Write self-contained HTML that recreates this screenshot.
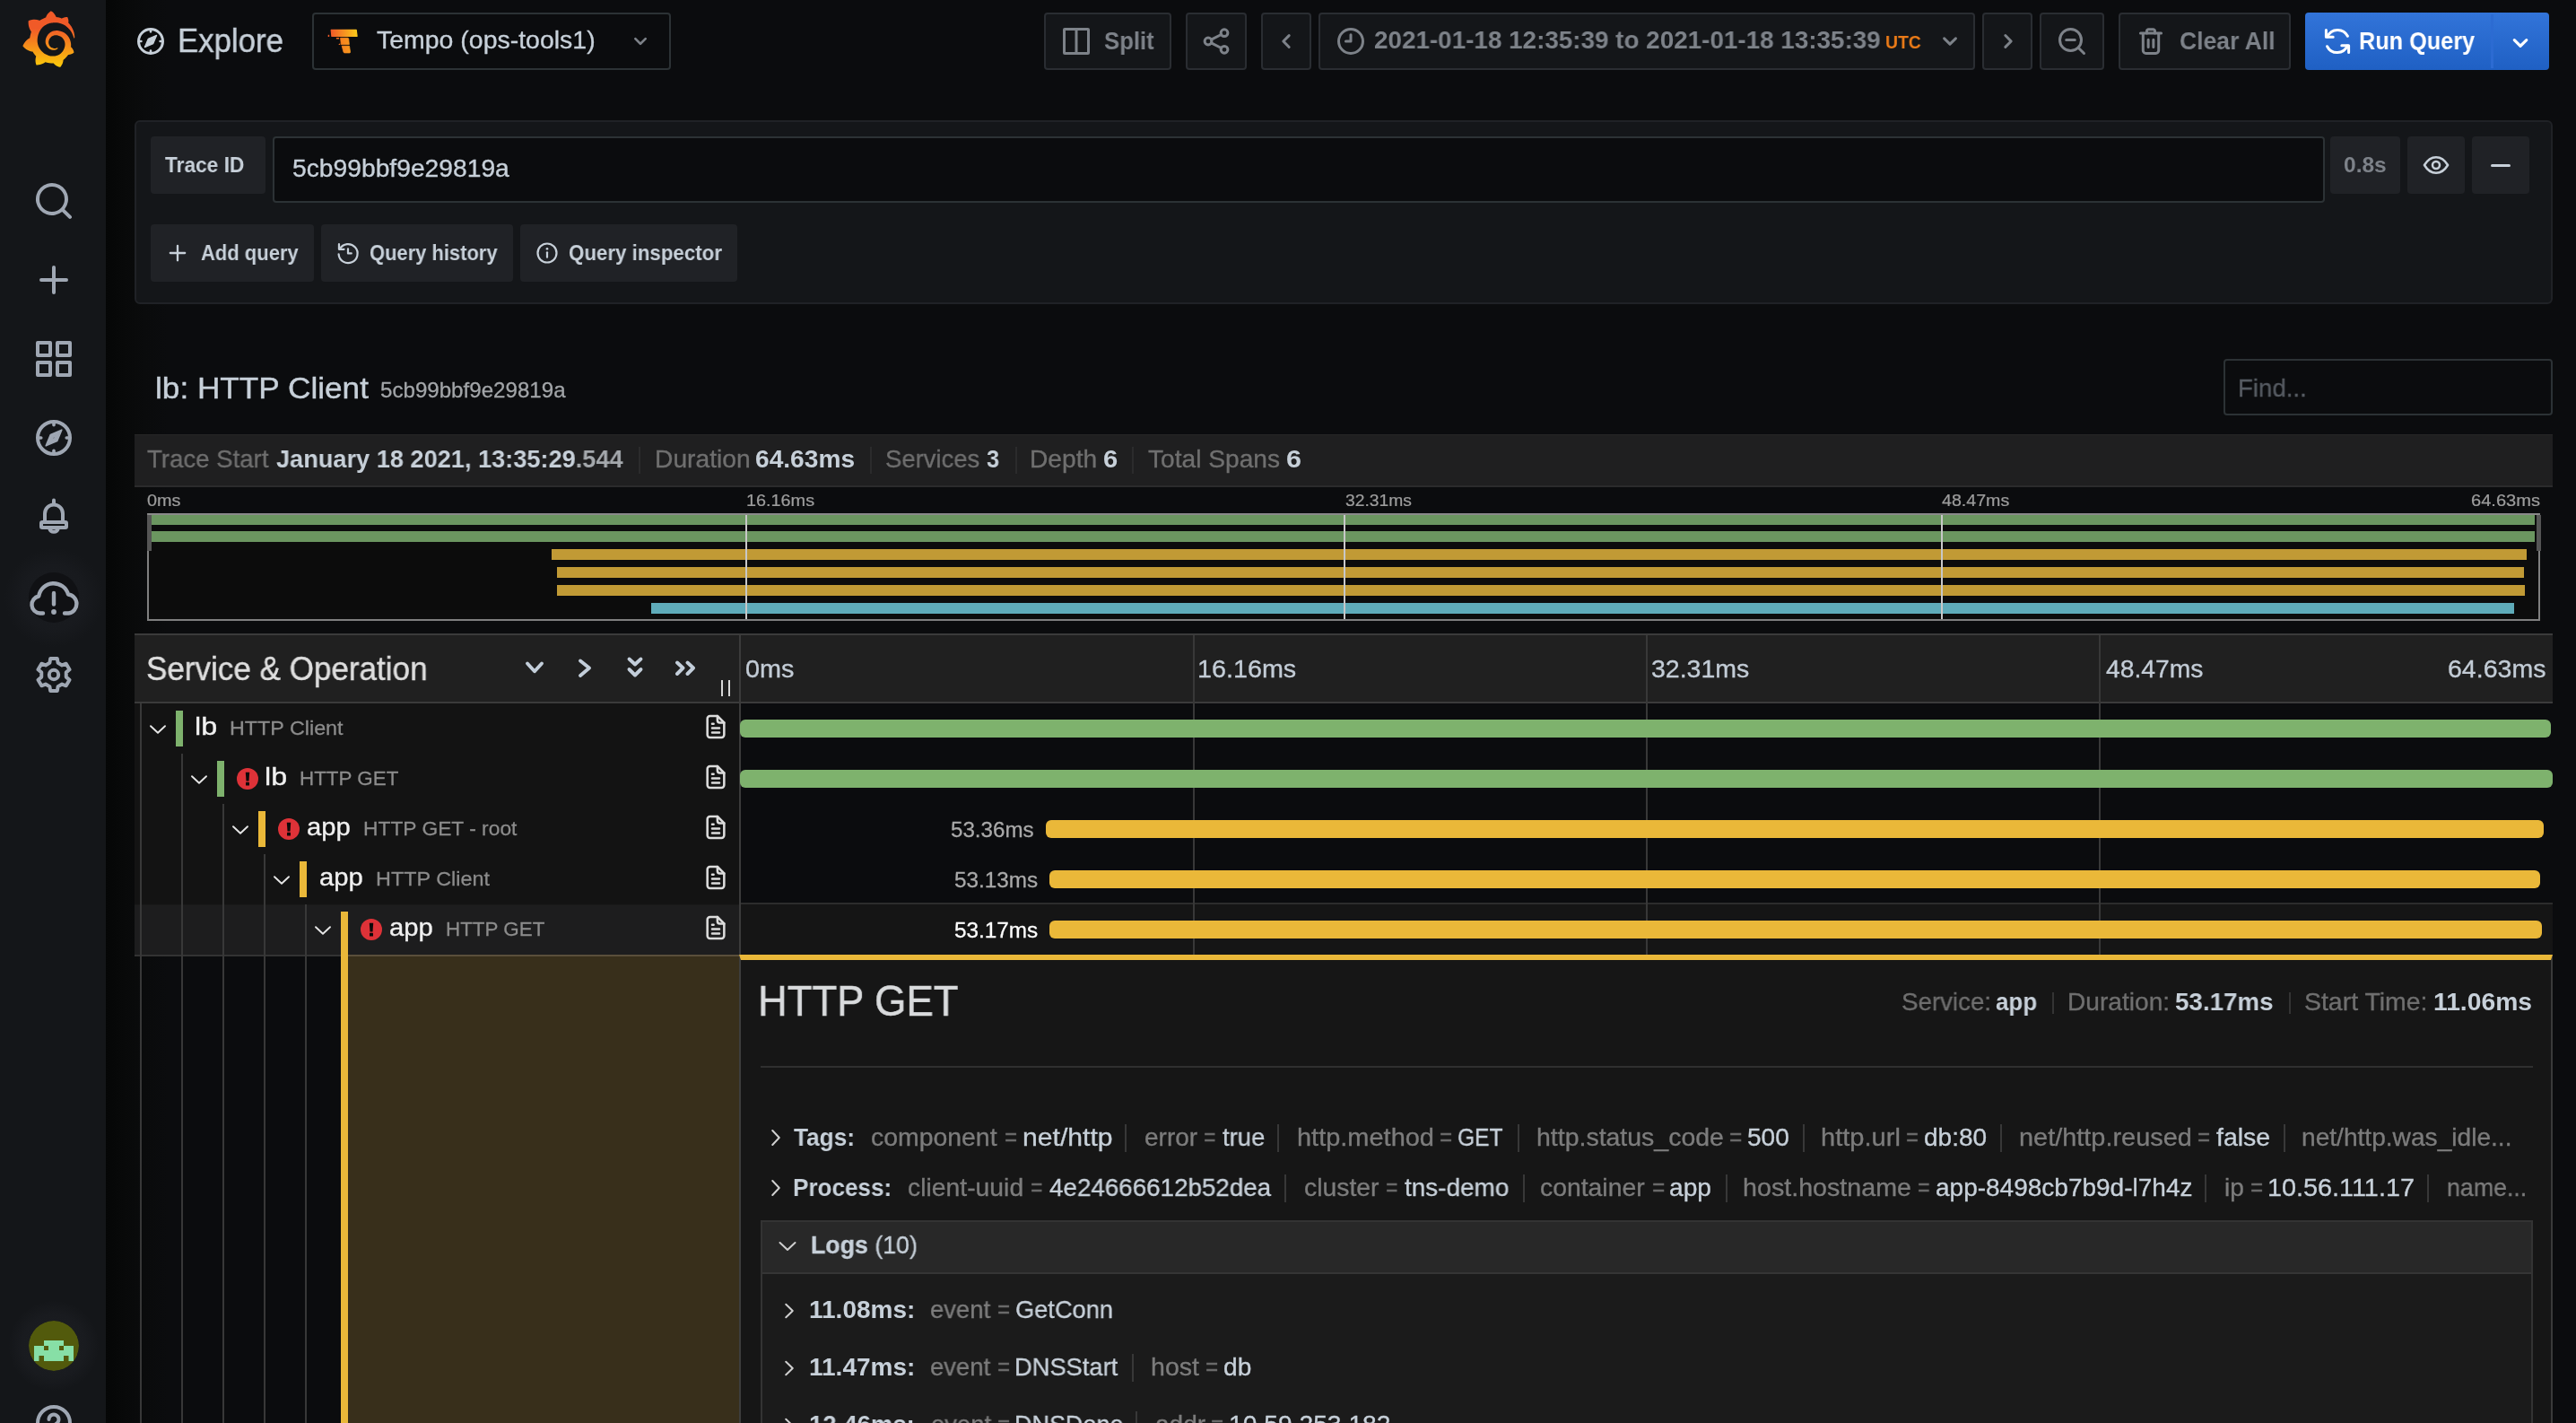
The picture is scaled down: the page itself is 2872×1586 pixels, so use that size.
<!DOCTYPE html>
<html lang="en"><head><meta charset="utf-8"><title>Explore - Tempo - Grafana</title>
<style>
html,body{margin:0;padding:0;background:#0b0c0e;}
body{width:2872px;height:1586px;overflow:hidden;position:relative;font-family:"Liberation Sans",Arial,sans-serif;}
#root,#root div,#root span,#root svg,#root section,#root nav,#root header,#root h1,#root h2,#root button,#root label{position:absolute;box-sizing:border-box;margin:0;padding:0;}
#root{left:0;top:0;width:2872px;height:1586px;overflow:hidden;background:#0b0c0e;}
.g{left:0;top:0;width:0;height:0;}
.t{white-space:pre;transform-origin:0 50%;font-weight:400;will-change:transform;}
.t b{font-weight:700;}
#root .t span,#root .t b{position:static;}
</style></head>
<body>
<div id="root">
<div style="left:118px;top:0px;width:70px;height:1586px;background:linear-gradient(90deg,#050606 0,#080909 28%,#0a0b0c 62%,#0b0c0e 100%);"></div>
<nav class="g" id="sidemenu">
<div style="left:0px;top:0px;width:118px;height:1586px;background:#141619;"></div>
<svg style="left:24px;top:12px" width="60.7" height="63.1" viewBox="0 0 351 365"><defs><linearGradient id="lg" gradientUnits="userSpaceOnUse" x1="175.5" y1="445" x2="175.5" y2="114"><stop offset="0" stop-color="#FFF100"/><stop offset="1" stop-color="#F05A28"/></linearGradient></defs><path fill="url(#lg)" d="M342,161.2c-0.6-6.1-1.6-13.1-3.6-20.9c-2-7.7-5-16.2-9.4-25c-4.4-8.8-10.1-17.9-17.5-26.8c-2.9-3.5-6.1-6.9-9.5-10.2c5.1-20.3-6.2-37.9-6.2-37.9c-19.5-1.2-31.9,6.1-36.5,9.4c-0.8-0.3-1.5-0.7-2.3-1c-3.3-1.3-6.7-2.6-10.3-3.7c-3.5-1.1-7.1-2.1-10.8-3c-3.7-0.9-7.4-1.6-11.2-2.2c-0.7-0.1-1.3-0.2-2-0.3c-8.5-27.2-32.9-38.6-32.9-38.6c-27.3,17.3-32.4,41.5-32.4,41.5s-0.1,0.5-0.3,1.4c-1.5,0.4-3,0.9-4.5,1.3c-2.1,0.6-4.2,1.4-6.2,2.2c-2.1,0.8-4.1,1.6-6.2,2.5c-4.1,1.8-8.2,3.8-12.2,6c-3.9,2.2-7.7,4.6-11.4,7.1c-0.5-0.2-1-0.4-1-0.4c-37.8-14.4-71.3,2.9-71.3,2.9c-3.1,40.2,15.1,65.5,18.7,70.1c-0.9,2.5-1.7,5-2.5,7.5c-2.8,9.1-4.9,18.4-6.2,28.1c-0.2,1.4-0.4,2.8-0.5,4.2C18.8,192.7,8.5,228,8.5,228c29.1,33.5,63.1,35.6,63.1,35.6c0,0,0.1-0.1,0.1-0.1c4.3,7.7,9.3,15,14.9,21.9c2.4,2.9,4.8,5.6,7.4,8.3c-10.6,30.4,1.5,55.6,1.5,55.6c32.4,1.2,53.7-14.2,58.2-17.7c3.2,1.1,6.5,2.1,9.8,2.9c10,2.6,20.2,4.1,30.4,4.5c2.5,0.1,5.1,0.2,7.6,0.1l1.2,0l0.8,0l1.6,0l1.6-0.1l0,0.1c15.3,21.8,42.1,24.9,42.1,24.9c19.1-20.1,20.2-40.1,20.2-44.4l0,0c0,0,0-0.1,0-0.3c0-0.4,0-0.6,0-0.6l0,0c0-0.3,0-0.6,0-0.9c4-2.8,7.8-5.8,11.4-9.1c7.6-6.9,14.3-14.8,19.9-23.3c0.5-0.8,1-1.6,1.5-2.4c21.6,1.2,36.9-13.4,36.9-13.4c-3.6-22.5-16.4-33.5-19.1-35.6l0,0c0,0-0.1-0.1-0.3-0.2c-0.2-0.1-0.2-0.2-0.2-0.2c0,0,0,0,0,0c-0.1-0.1-0.3-0.2-0.5-0.3c0.1-1.4,0.2-2.7,0.3-4.1c0.2-2.4,0.2-4.9,0.2-7.3l0-1.8l0-0.9l0-0.5c0-0.6,0-0.4,0-0.6l-0.1-1.5l-0.1-2c0-0.7-0.1-1.3-0.2-1.9c-0.1-0.6-0.1-1.3-0.2-1.9l-0.2-1.9l-0.3-1.9c-0.4-2.5-0.8-4.9-1.4-7.4c-2.3-9.7-6.1-18.9-11-27.2c-5-8.3-11.2-15.6-18.3-21.8c-7-6.2-14.9-11.2-23.1-14.9c-8.3-3.7-16.9-6.1-25.5-7.2c-4.3-0.6-8.6-0.8-12.9-0.7l-1.6,0l-0.4,0c-0.1,0-0.6,0-0.5,0l-0.7,0l-1.6,0.1c-0.6,0-1.2,0.1-1.7,0.1c-2.2,0.2-4.4,0.5-6.5,0.9c-8.6,1.6-16.7,4.7-23.8,9c-7.1,4.3-13.3,9.6-18.3,15.6c-5,6-8.9,12.7-11.6,19.6c-2.7,6.9-4.2,14.1-4.6,21c-0.1,1.7-0.1,3.5-0.1,5.2c0,0.4,0,0.9,0,1.3l0.1,1.4c0.1,0.8,0.1,1.7,0.2,2.5c0.3,3.5,1,6.9,1.9,10.1c1.9,6.5,4.9,12.4,8.6,17.4c3.7,5,8.2,9.1,12.9,12.4c4.7,3.2,9.8,5.5,14.8,7c5,1.5,10,2.1,14.7,2.1c0.6,0,1.2,0,1.7,0c0.3,0,0.6,0,0.9,0c0.3,0,0.6,0,0.9-0.1c0.5,0,1-0.1,1.5-0.1c0.1,0,0.3,0,0.4-0.1l0.5-0.1c0.3,0,0.6-0.1,0.9-0.1c0.6-0.1,1.1-0.2,1.7-0.3c0.6-0.1,1.1-0.2,1.6-0.4c1.1-0.2,2.1-0.6,3.1-0.9c2-0.7,4-1.5,5.7-2.4c1.8-0.9,3.4-2,5-3c0.4-0.3,0.9-0.6,1.3-1c1.6-1.3,1.9-3.7,0.6-5.3c-1.1-1.4-3.1-1.8-4.7-0.9c-0.4,0.2-0.8,0.4-1.2,0.6c-1.4,0.7-2.8,1.3-4.3,1.8c-1.5,0.5-3.1,0.9-4.7,1.2c-0.8,0.1-1.6,0.2-2.5,0.3c-0.4,0-0.8,0.1-1.3,0.1c-0.4,0-0.9,0-1.2,0c-0.4,0-0.8,0-1.2,0c-0.5,0-1,0-1.5-0.1c0,0-0.3,0-0.1,0l-0.2,0l-0.3,0c-0.2,0-0.5,0-0.7-0.1c-0.5-0.1-0.9-0.1-1.4-0.2c-3.7-0.5-7.4-1.6-10.9-3.2c-3.6-1.6-7-3.8-10.1-6.6c-3.1-2.8-5.8-6.1-7.9-9.9c-2.1-3.8-3.6-8-4.3-12.4c-0.3-2.2-0.5-4.5-0.4-6.7c0-0.6,0.1-1.2,0.1-1.8c0,0.2,0-0.1,0-0.1l0-0.2l0-0.5c0-0.3,0.1-0.6,0.1-0.9c0.1-1.2,0.3-2.4,0.5-3.6c1.7-9.6,6.5-19,13.9-26.1c1.9-1.8,3.9-3.4,6-4.9c2.1-1.5,4.4-2.8,6.8-3.9c2.4-1.1,4.8-2,7.4-2.7c2.5-0.7,5.1-1.1,7.8-1.4c1.3-0.1,2.6-0.2,4-0.2c0.4,0,0.6,0,0.9,0l1.1,0l0.7,0c0.3,0,0,0,0.1,0l0.3,0l1.1,0.1c2.9,0.2,5.7,0.6,8.5,1.3c5.6,1.2,11.1,3.3,16.2,6.1c10.2,5.7,18.9,14.5,24.2,25.1c2.7,5.3,4.6,11,5.5,16.9c0.2,1.5,0.4,3,0.5,4.5l0.1,1.1l0.1,1.1c0,0.4,0,0.8,0,1.1c0,0.4,0,0.8,0,1.1l0,1l0,1.1c0,0.7-0.1,1.9-0.1,2.6c-0.1,1.6-0.3,3.3-0.5,4.9c-0.2,1.6-0.5,3.2-0.8,4.8c-0.3,1.6-0.7,3.2-1.1,4.7c-0.8,3.1-1.8,6.2-3,9.3c-2.4,6-5.6,11.8-9.4,17.1c-7.7,10.6-18.2,19.2-30.2,24.7c-6,2.7-12.3,4.7-18.8,5.7c-3.2,0.6-6.5,0.9-9.8,1l-0.6,0l-0.5,0l-1.1,0l-1.6,0l-0.8,0c0.4,0-0.1,0-0.1,0l-0.3,0c-1.8,0-3.5-0.1-5.3-0.3c-7-0.5-13.9-1.8-20.7-3.7c-6.7-1.9-13.2-4.6-19.4-7.8c-12.3-6.6-23.4-15.6-32-26.5c-4.3-5.4-8.1-11.3-11.2-17.4c-3.1-6.1-5.6-12.6-7.4-19.1c-1.8-6.6-2.9-13.3-3.4-20.1l-0.1-1.3l0-0.3l0-0.3l0-0.6l0-1.1l0-0.3l0-0.4l0-0.8l0-1.6l0-0.3c0,0,0,0.1,0-0.1l0-0.6c0-0.8,0-1.7,0-2.5c0.1-3.3,0.4-6.8,0.8-10.2c0.4-3.4,1-6.9,1.7-10.3c0.7-3.4,1.5-6.8,2.5-10.2c1.9-6.7,4.3-13.2,7.1-19.3c5.7-12.2,13.1-23.1,22-31.8c2.2-2.2,4.5-4.2,6.9-6.2c2.4-1.9,4.9-3.7,7.5-5.4c2.5-1.7,5.2-3.2,7.9-4.6c1.3-0.7,2.7-1.4,4.1-2c0.7-0.3,1.4-0.6,2.1-0.9c0.7-0.3,1.4-0.6,2.1-0.9c2.8-1.2,5.7-2.2,8.7-3.1c0.7-0.2,1.5-0.4,2.2-0.7c0.7-0.2,1.5-0.4,2.2-0.6c1.5-0.4,3-0.8,4.5-1.1c0.7-0.2,1.5-0.3,2.3-0.5c0.8-0.2,1.5-0.3,2.3-0.5c0.8-0.1,1.5-0.3,2.3-0.4l1.1-0.2l1.2-0.2c0.8-0.1,1.5-0.2,2.3-0.3c0.9-0.1,1.7-0.2,2.6-0.3c0.7-0.1,1.9-0.2,2.6-0.3c0.5-0.1,1.1-0.1,1.6-0.2l1.1-0.1l0.5-0.1l0.6,0c0.9-0.1,1.7-0.1,2.6-0.2l1.3-0.1c0,0,0.5,0,0.1,0l0.3,0l0.6,0c0.7,0,1.5-0.1,2.2-0.1c2.9-0.1,5.9-0.1,8.8,0c5.8,0.2,11.5,0.9,17,1.9c11.1,2.1,21.5,5.6,31,10.3c9.5,4.6,17.9,10.3,25.3,16.5c0.5,0.4,0.9,0.8,1.4,1.2c0.4,0.4,0.9,0.8,1.3,1.2c0.9,0.8,1.7,1.6,2.6,2.4c0.9,0.8,1.7,1.6,2.5,2.4c0.8,0.8,1.6,1.6,2.4,2.5c3.1,3.3,6,6.6,8.6,10c5.2,6.7,9.4,13.5,12.7,19.9c0.2,0.4,0.4,0.8,0.6,1.2c0.2,0.4,0.4,0.8,0.6,1.2c0.4,0.8,0.8,1.6,1.1,2.4c0.4,0.8,0.7,1.5,1.1,2.3c0.3,0.8,0.7,1.5,1,2.3c1.2,3,2.4,5.9,3.3,8.6c1.5,4.4,2.6,8.3,3.5,11.7c0.3,1.4,1.6,2.3,3,2.1c1.5-0.1,2.6-1.3,2.6-2.8C342.6,170.4,342.5,166.1,342,161.2z"/></svg>
<svg style="left:36px;top:200px;" width="48" height="48" viewBox="0 0 24 24" ><path fill="#9fa7b3" d="M21.71,20.29,18,16.61A9,9,0,1,0,16.61,18l3.68,3.68a1,1,0,0,0,1.42,0A1,1,0,0,0,21.71,20.29ZM11,18a7,7,0,1,1,7-7A7,7,0,0,1,11,18Z"/></svg>
<svg style="left:36px;top:288px;" width="48" height="48" viewBox="0 0 24 24" ><path fill="#9fa7b3" d="M19,11H13V5a1,1,0,0,0-2,0v6H5a1,1,0,0,0,0,2h6v6a1,1,0,0,0,2,0V13h6a1,1,0,0,0,0-2Z"/></svg>
<svg style="left:36px;top:376px;" width="48" height="48" viewBox="0 0 24 24" ><path fill="#9fa7b3" d="M10,13H3a1,1,0,0,0-1,1v7a1,1,0,0,0,1,1h7a1,1,0,0,0,1-1V14A1,1,0,0,0,10,13ZM9,20H4V15H9ZM21,2H14a1,1,0,0,0-1,1v7a1,1,0,0,0,1,1h7a1,1,0,0,0,1-1V3A1,1,0,0,0,21,2ZM20,9H15V4h5Zm1,4H14a1,1,0,0,0-1,1v7a1,1,0,0,0,1,1h7a1,1,0,0,0,1-1V14A1,1,0,0,0,21,13Zm-1,7H15V15h5ZM10,2H3A1,1,0,0,0,2,3v7a1,1,0,0,0,1,1h7a1,1,0,0,0,1-1V3A1,1,0,0,0,10,2ZM9,9H4V4H9Z"/></svg>
<svg style="left:36px;top:464px;" width="48" height="48" viewBox="0 0 24 24" ><g fill="none" stroke="#9fa7b3" stroke-width="2" stroke-linecap="round" stroke-linejoin="round"><circle cx="12" cy="12" r="9"/><path d="M12,3.4v1.5M12,19.1v1.5M3.4,12h1.5M19.1,12h1.5" stroke-width="1.8"/></g><path fill="#9fa7b3" fill-rule="evenodd" stroke="#9fa7b3" stroke-width="0.8" stroke-linejoin="round" d="M16.4,7.6 L13.8,13.8 L7.6,16.4 L10.2,10.2 Z M13.2,10.8 L11.6,11.6 L10.8,13.2 L12.4,12.4 Z"/></svg>
<svg style="left:36px;top:552px;" width="48" height="48" viewBox="0 0 24 24" ><g fill="none" stroke="#9fa7b3" stroke-width="2" stroke-linecap="round" stroke-linejoin="round"><path d="M12,2.8v1.6"/><path d="M7,15V10.2a5,5,0,0,1,10,0V15"/><rect x="5" y="15" width="14" height="3" rx="0.6"/><path d="M9.6,18.6a2.5,2.5,0,0,0,4.8,0"/></g></svg>
<div style="left:4px;top:610px;width:112px;height:112px;border-radius:50%;background:radial-gradient(circle,#1a1c20 0,#181a1e 45%,#141619 70%);"></div>
<div style="left:32px;top:638px;width:56px;height:56px;background:#101114;border-radius:50%;"></div>
<svg style="left:30px;top:640px;" width="60" height="52" viewBox="0 0 60 52" ><g fill="none" stroke="#9fa7b3" stroke-width="4.4" stroke-linecap="round" stroke-linejoin="round"><path d="M18,43.5 H14.5 A9.6,9.6 0 0 1 13.2,24.5 A16.8,16.8 0 0 1 46,22.5 A10.6,10.6 0 0 1 46.5,43.5 H42"/><path d="M30,21 V33.5"/></g><circle cx="30" cy="42" r="2.9" fill="#9fa7b3"/></svg>
<svg style="left:36px;top:728px;" width="48" height="48" viewBox="0 0 24 24" ><g fill="none" stroke="#9fa7b3" stroke-width="2" stroke-linejoin="round"><path d="M10.09,3.00 L13.91,3.00 L14.30,5.39 L16.57,6.70 L18.84,5.84 L20.75,9.16 L18.88,10.69 L18.88,13.31 L20.75,14.84 L18.84,18.16 L16.57,17.30 L14.30,18.61 L13.91,21.00 L10.09,21.00 L9.70,18.61 L7.43,17.30 L5.16,18.16 L3.25,14.84 L5.12,13.31 L5.12,10.69 L3.25,9.16 L5.16,5.84 L7.43,6.70 L9.70,5.39Z"/><circle cx="12" cy="12" r="2.6"/></g></svg>
<div style="left:10px;top:1450px;width:100px;height:100px;border-radius:50%;background:radial-gradient(circle,#1c1e22 0,#191b1f 50%,#141619 72%);"></div>
<svg style="left:32px;top:1472px;border-radius:50%;" width="56" height="56" viewBox="0 0 56 56" ><circle cx="28" cy="28" r="28" fill="#525a0c"/><path fill="#87dfa6" d="M17,22h22v6h11v17h-5.5v-6h-5.5v6h-22v-6h-5.5v6h-5.5v-17h11z M17,28v5h5v-5z M34,28v5h5v-5z" fill-rule="evenodd"/></svg>
<svg style="left:36px;top:1562px;" width="48" height="48" viewBox="0 0 48 48" ><circle cx="24" cy="24" r="18" fill="none" stroke="#9fa7b3" stroke-width="4"/><path d="M18.5,20 a5.5,5.5 0 1 1 8.5,4.6 c-1.8,1.2 -3,2 -3,4.4" fill="none" stroke="#9fa7b3" stroke-width="4" stroke-linecap="round"/></svg>
</nav>
<header class="g" id="explore-toolbar">
<svg style="left:150px;top:28px;" width="36" height="36" viewBox="0 0 24 24" ><g fill="none" stroke="#c7d0d9" stroke-width="2" stroke-linecap="round" stroke-linejoin="round"><circle cx="12" cy="12" r="9"/><path d="M12,3.4v1.5M12,19.1v1.5M3.4,12h1.5M19.1,12h1.5" stroke-width="1.8"/></g><path fill="#c7d0d9" fill-rule="evenodd" stroke="#c7d0d9" stroke-width="0.8" stroke-linejoin="round" d="M16.4,7.6 L13.8,13.8 L7.6,16.4 L10.2,10.2 Z M13.2,10.8 L11.6,11.6 L10.8,13.2 L12.4,12.4 Z"/></svg>
<h1 id="t1" class="t" style="left:198.07px;top:27.53px;font-size:36px;line-height:36px;color:#c7d0d9;-webkit-text-stroke:0.43px currentColor;transform:scaleX(0.9664);">Explore</h1>
<div style="left:348px;top:14px;width:400px;height:64px;background:#0b0c0e;border:2px solid #2c3235;border-radius:4px;"></div>
<svg style="left:362px;top:30px;" width="40" height="32" viewBox="0 0 40 32" ><defs><linearGradient id="tg" x1="0" y1="0" x2="1" y2="0"><stop offset="0" stop-color="#f05a28"/><stop offset="1" stop-color="#fbca1a"/></linearGradient><linearGradient id="tg2" x1="0" y1="0" x2="1" y2="0"><stop offset="0" stop-color="#f5801f"/><stop offset="1" stop-color="#f7971d"/></linearGradient></defs><path fill="url(#tg)" stroke="url(#tg)" stroke-width="1.2" stroke-linejoin="round" d="M7.2,3.4 H35.2 L36.1,10.4 H7.9 Z"/><path fill="#f05a28" d="M3.7,8.8h1.5v2.2h-1.5z"/><path fill="url(#tg2)" stroke="url(#tg2)" stroke-width="0.8" stroke-linejoin="round" d="M17.6,12.3 H25.6 Q26.5,12.3 26.7,13.2 L27.3,19.6 H18.3 Z M19.2,21.3 H27.5 L28.5,27.9 Q28.6,28.9 27.6,28.9 H22.2 Q21.3,28.9 21,28 Z"/><path fill="#f37021" d="M12.9,11.9h3.2v1.7h-3.2z M15.2,19.9 L17.2,18.1 V19.9 Z"/></svg>
<span id="t2" class="t" style="left:419.51px;top:30.80px;font-size:28px;line-height:28px;color:#c7d0d9;-webkit-text-stroke:0.34px currentColor;transform:scaleX(1.0167);">Tempo (ops-tools1)</span>
<svg style="left:698.0px;top:30.3px;" width="32" height="32" viewBox="0 0 24 24" ><path fill="#7d8289" transform="rotate(0 12 12)" d="M17,9.17a1,1,0,0,0-1.41,0L12,12.71,8.46,9.17a1,1,0,0,0-1.41,0,1,1,0,0,0,0,1.42l4.24,4.24a1,1,0,0,0,1.42,0L17,10.59A1,1,0,0,0,17,9.17Z"/></svg>
<div style="left:1164px;top:14px;width:142px;height:64px;background:#141619;border:2px solid #2a2d32;border-radius:4px;"></div>
<svg style="left:1182px;top:28px;" width="36" height="36" viewBox="0 0 24 24" ><g fill="none" stroke="#7d8289" stroke-width="2" stroke-linecap="butt" stroke-linejoin="round"><rect x="3" y="3" width="18" height="18" rx="0.4"/><path d="M12,3v18"/></g></svg>
<span id="t3" class="t" style="left:1231.08px;top:31.80px;font-size:28px;line-height:28px;color:#7d8289;font-weight:700;transform:scaleX(0.9189);">Split</span>
<div style="left:1322px;top:14px;width:68px;height:64px;background:#141619;border:2px solid #2a2d32;border-radius:4px;"></div>
<svg style="left:1338px;top:28px;" width="36" height="36" viewBox="0 0 24 24" ><g fill="none" stroke="#7d8289" stroke-width="2" stroke-linecap="round" stroke-linejoin="round"><circle cx="18" cy="5.8" r="2.6"/><circle cx="6" cy="12" r="2.6"/><circle cx="18" cy="18.2" r="2.6"/><path d="M8.3,10.8 L15.7,7 M8.3,13.2 L15.7,17"/></g></svg>
<div style="left:1406px;top:14px;width:56px;height:64px;background:#141619;border:2px solid #2a2d32;border-radius:4px;"></div>
<svg style="left:1415.5px;top:28.0px;" width="36" height="36" viewBox="0 0 24 24" ><path fill="#7d8289" transform="rotate(90 12 12)" d="M17,9.17a1,1,0,0,0-1.41,0L12,12.71,8.46,9.17a1,1,0,0,0-1.41,0,1,1,0,0,0,0,1.42l4.24,4.24a1,1,0,0,0,1.42,0L17,10.59A1,1,0,0,0,17,9.17Z"/></svg>
<div style="left:1470px;top:14px;width:732px;height:64px;background:#141619;border:2px solid #2a2d32;border-radius:4px;"></div>
<svg style="left:1488px;top:28px;" width="36" height="36" viewBox="0 0 24 24" ><g fill="none" stroke="#7d8289" stroke-width="2" stroke-linecap="round" stroke-linejoin="round"><circle cx="12" cy="12" r="9"/><path d="M12,7.2V12H8.3"/></g></svg>
<span id="t4" class="t" style="left:1531.51px;top:30.80px;font-size:28px;line-height:28px;color:#7d8289;font-weight:700;transform:scaleX(0.9939);">2021-01-18 12:35:39 to 2021-01-18 13:35:39</span>
<span id="t5" class="t" style="left:2102.42px;top:35.97px;font-size:21px;line-height:21px;color:#eb7b18;font-weight:700;transform:scaleX(0.9205);">UTC</span>
<svg style="left:2155.9px;top:28.2px;" width="36" height="36" viewBox="0 0 24 24" ><path fill="#7d8289" transform="rotate(0 12 12)" d="M17,9.17a1,1,0,0,0-1.41,0L12,12.71,8.46,9.17a1,1,0,0,0-1.41,0,1,1,0,0,0,0,1.42l4.24,4.24a1,1,0,0,0,1.42,0L17,10.59A1,1,0,0,0,17,9.17Z"/></svg>
<div style="left:2210px;top:14px;width:56px;height:64px;background:#141619;border:2px solid #2a2d32;border-radius:4px;"></div>
<svg style="left:2220.5px;top:28.0px;" width="36" height="36" viewBox="0 0 24 24" ><path fill="#7d8289" transform="rotate(-90 12 12)" d="M17,9.17a1,1,0,0,0-1.41,0L12,12.71,8.46,9.17a1,1,0,0,0-1.41,0,1,1,0,0,0,0,1.42l4.24,4.24a1,1,0,0,0,1.42,0L17,10.59A1,1,0,0,0,17,9.17Z"/></svg>
<div style="left:2274px;top:14px;width:72px;height:64px;background:#141619;border:2px solid #2a2d32;border-radius:4px;"></div>
<svg style="left:2292px;top:28px;" width="36" height="36" viewBox="0 0 24 24" ><g fill="none" stroke="#7d8289" stroke-width="2" stroke-linecap="round" stroke-linejoin="round"><circle cx="11" cy="11" r="8"/><path d="M16.8,16.8 L21,21 M7.8,11 H14.2"/></g></svg>
<div style="left:2362px;top:14px;width:192px;height:64px;background:#141619;border:2px solid #2a2d32;border-radius:4px;"></div>
<svg style="left:2380px;top:28px;" width="36" height="36" viewBox="0 0 24 24" ><g fill="none" stroke="#7d8289" stroke-width="2" stroke-linecap="round" stroke-linejoin="round"><path d="M4.3,6 H19.7"/><path d="M9,6 V4.4 a1.3,1.3 0 0 1 1.3,-1.3 h3.4 a1.3,1.3 0 0 1 1.3,1.3 V6"/><path d="M6.2,6.4 V18.8 a2.2,2.2 0 0 0 2.2,2.2 h7.2 a2.2,2.2 0 0 0 2.2,-2.2 V6.4"/><path d="M10.1,10.8 v5.6 M13.9,10.8 v5.6"/></g></svg>
<span id="t6" class="t" style="left:2430.05px;top:31.80px;font-size:28px;line-height:28px;color:#7d8289;font-weight:700;transform:scaleX(0.9468);">Clear All</span>
<div style="left:2570px;top:14px;width:272px;height:64px;background:linear-gradient(180deg,#3274d9 0,#1f60c4 100%);border-radius:4px;"></div>
<div style="left:2777px;top:16px;width:3px;height:60px;background:#2c6bd2;"></div>
<svg style="left:2588px;top:28px;" width="36" height="36" viewBox="0 0 24 24" ><g fill="none" stroke="#fff" stroke-width="2" stroke-linecap="round" stroke-linejoin="round"><path d="M4.6,8.6 A8.3,8.3 0 0 1 19.6,8.2"/><path d="M3.6,3.6 V8.8 H8.8"/><path d="M19.4,15.4 A8.3,8.3 0 0 1 4.4,15.8"/><path d="M20.4,20.4 V15.2 H15.2"/></g></svg>
<span id="t7" class="t" style="left:2630.09px;top:31.80px;font-size:28px;line-height:28px;color:#ffffff;font-weight:700;transform:scaleX(0.9021);">Run Query</span>
<svg style="left:2791.1px;top:29.0px;" width="38" height="38" viewBox="0 0 24 24" ><path fill="#fff" transform="rotate(0 12 12)" d="M17,9.17a1,1,0,0,0-1.41,0L12,12.71,8.46,9.17a1,1,0,0,0-1.41,0,1,1,0,0,0,0,1.42l4.24,4.24a1,1,0,0,0,1.42,0L17,10.59A1,1,0,0,0,17,9.17Z"/></svg>
</header>
<section class="g" id="query-row">
<div style="left:150px;top:134px;width:2696px;height:205px;background:#141619;border:2px solid #202226;border-radius:6px;"></div>
<div style="left:168px;top:152px;width:128px;height:64px;background:#202226;border-radius:4px;"></div>
<label id="t8" class="t" style="left:184.00px;top:171.68px;font-size:24px;line-height:24px;color:#c7d0d9;font-weight:700;transform:scaleX(0.9460);">Trace ID</label>
<div style="left:304px;top:152px;width:2288px;height:74px;background:#0b0c0e;border:2px solid #2c3235;border-radius:4px;"></div>
<span id="t9" class="t" style="left:326.00px;top:174.30px;font-size:28px;line-height:28px;color:#c7d0d9;-webkit-text-stroke:0.34px currentColor;transform:scaleX(1.0084);">5cb99bbf9e29819a</span>
<div style="left:2598px;top:152px;width:78px;height:64px;background:#202226;border-radius:4px;"></div>
<span id="t10" class="t" style="left:2613.00px;top:172.18px;font-size:24px;line-height:24px;color:#7d8289;font-weight:700;transform:scaleX(1.0222);">0.8s</span>
<div style="left:2684px;top:152px;width:64px;height:64px;background:#202226;border-radius:4px;"></div>
<svg style="left:2700px;top:168px;" width="32" height="32" viewBox="0 0 24 24" ><g fill="none" stroke="#c7d0d9" stroke-width="1.9" stroke-linecap="round" stroke-linejoin="round"><path d="M2.2,12 C5,7.4 8.3,5.4 12,5.4 S19,7.4 21.8,12 C19,16.6 15.7,18.6 12,18.6 S5,16.6 2.2,12 Z"/><circle cx="12" cy="12" r="3"/></g></svg>
<div style="left:2756px;top:152px;width:64px;height:64px;background:#202226;border-radius:4px;"></div>
<div style="left:2777px;top:182.5px;width:22px;height:3px;background:#c7d0d9;border-radius:1.5px;"></div>
<div style="left:168px;top:250px;width:182px;height:64px;background:#202226;border-radius:4px;"></div>
<svg style="left:184px;top:268px;" width="28" height="28" viewBox="0 0 24 24" ><path fill="#c7d0d9" d="M19,11H13V5a1,1,0,0,0-2,0v6H5a1,1,0,0,0,0,2h6v6a1,1,0,0,0,2,0V13h6a1,1,0,0,0,0-2Z"/></svg>
<span id="t11" class="t" style="left:224.00px;top:269.68px;font-size:24px;line-height:24px;color:#c7d0d9;font-weight:700;transform:scaleX(0.9160);">Add query</span>
<div style="left:358px;top:250px;width:214px;height:64px;background:#202226;border-radius:4px;"></div>
<svg style="left:373.75px;top:268px;" width="28" height="28" viewBox="0 0 24 24" ><g fill="none" stroke="#c7d0d9" stroke-width="1.9" stroke-linecap="round" stroke-linejoin="round"><path d="M4.2,8.2 A9,9 0 1 1 3.1,13.2"/><path d="M3.4,3.6 V8.4 H8.2"/><path d="M12,8 V12.4 H15.2"/></g></svg>
<span id="t12" class="t" style="left:412.25px;top:269.68px;font-size:24px;line-height:24px;color:#c7d0d9;font-weight:700;transform:scaleX(0.9135);">Query history</span>
<div style="left:580px;top:250px;width:242px;height:64px;background:#202226;border-radius:4px;"></div>
<svg style="left:596px;top:268px;" width="28" height="28" viewBox="0 0 24 24" ><g fill="none" stroke="#c7d0d9" stroke-width="1.9" stroke-linecap="round" stroke-linejoin="round"><circle cx="12" cy="12" r="9"/><path d="M12,11.4V16"/></g><circle cx="12" cy="8" r="1.15" fill="#c7d0d9"/></svg>
<span id="t13" class="t" style="left:634.26px;top:269.68px;font-size:24px;line-height:24px;color:#c7d0d9;font-weight:700;transform:scaleX(0.9289);">Query inspector</span>
</section>
<section class="g" id="trace-view">
<h2 id="t14" class="t" style="left:172.93px;top:414.97px;font-size:34px;line-height:34px;color:#c7d0d9;-webkit-text-stroke:0.41px currentColor;transform:scaleX(1.0351);">lb: HTTP Client</h2>
<span id="t15" class="t" style="left:424.00px;top:423.43px;font-size:24px;line-height:24px;color:#a2a5a8;-webkit-text-stroke:0.29px currentColor;transform:scaleX(1.0049);">5cb99bbf9e29819a</span>
<div style="left:2479px;top:400px;width:367px;height:63px;background:#0b0c0e;border:2px solid #2c3235;border-radius:4px;"></div>
<span id="t16" class="t" style="left:2495.02px;top:419.10px;font-size:28px;line-height:28px;color:#565b62;-webkit-text-stroke:0.34px currentColor;transform:scaleX(0.9865);">Find...</span>
<div style="left:150px;top:484px;width:2696px;height:59px;background:#1f1f20;border-top:1px solid #262626;border-bottom:2px solid #2b2b2c;"></div>
<span id="t17" class="t" style="left:164.00px;top:498.30px;font-size:28px;line-height:28px;color:#6f6f6f;-webkit-text-stroke:0.34px currentColor;transform:scaleX(0.9855);">Trace Start</span>
<span id="t18" class="t" style="left:308.00px;top:498.30px;font-size:28px;line-height:28px;color:#c7d0d9;font-weight:700;transform:scaleX(0.9700);">January 18 2021, 13:35:29<span style="color:#a4a8ac">.544</span></span>
<span id="t19" class="t" style="left:729.79px;top:498.30px;font-size:28px;line-height:28px;color:#6f6f6f;-webkit-text-stroke:0.34px currentColor;transform:scaleX(1.0091);">Duration</span>
<span id="t20" class="t" style="left:842.26px;top:498.30px;font-size:28px;line-height:28px;color:#c7d0d9;font-weight:700;transform:scaleX(1.0048);">64.63ms</span>
<span id="t21" class="t" style="left:987.02px;top:498.30px;font-size:28px;line-height:28px;color:#6f6f6f;-webkit-text-stroke:0.34px currentColor;transform:scaleX(0.9811);">Services</span>
<span id="t22" class="t" style="left:1100.37px;top:498.30px;font-size:28px;line-height:28px;color:#c7d0d9;font-weight:700;transform:scaleX(0.9073);">3</span>
<span id="t23" class="t" style="left:1148.27px;top:498.30px;font-size:28px;line-height:28px;color:#6f6f6f;-webkit-text-stroke:0.34px currentColor;transform:scaleX(1.0074);">Depth</span>
<span id="t24" class="t" style="left:1230.17px;top:498.30px;font-size:28px;line-height:28px;color:#c7d0d9;font-weight:700;transform:scaleX(1.0416);">6</span>
<span id="t25" class="t" style="left:1280.00px;top:498.30px;font-size:28px;line-height:28px;color:#6f6f6f;-webkit-text-stroke:0.34px currentColor;transform:scaleX(1.0051);">Total Spans</span>
<span id="t26" class="t" style="left:1433.97px;top:498.30px;font-size:28px;line-height:28px;color:#c7d0d9;font-weight:700;transform:scaleX(1.0921);">6</span>
<div style="left:711.5px;top:498px;width:2px;height:30px;background:#2b2b2c;"></div>
<div style="left:969.75px;top:498px;width:2px;height:30px;background:#2b2b2c;"></div>
<div style="left:1132.25px;top:498px;width:2px;height:30px;background:#2b2b2c;"></div>
<div style="left:1262px;top:498px;width:2px;height:30px;background:#2b2b2c;"></div>
<span id="t27" class="t" style="left:164.00px;top:547.50px;font-size:19.2px;line-height:19.2px;color:#9d9d9d;-webkit-text-stroke:0.23px currentColor;transform:scaleX(1.0324);">0ms</span>
<span id="t28" class="t" style="left:831.54px;top:547.50px;font-size:19.2px;line-height:19.2px;color:#9d9d9d;-webkit-text-stroke:0.23px currentColor;transform:scaleX(1.0335);">16.16ms</span>
<span id="t29" class="t" style="left:1500.05px;top:547.50px;font-size:19.2px;line-height:19.2px;color:#9d9d9d;-webkit-text-stroke:0.23px currentColor;transform:scaleX(1.0040);">32.31ms</span>
<span id="t30" class="t" style="left:2165.00px;top:547.50px;font-size:19.2px;line-height:19.2px;color:#9d9d9d;-webkit-text-stroke:0.23px currentColor;transform:scaleX(1.0230);">48.47ms</span>
<span id="t31" class="t" style="left:2755.04px;top:547.50px;font-size:19.2px;line-height:19.2px;color:#9d9d9d;-webkit-text-stroke:0.23px currentColor;transform:scaleX(1.0466);">64.63ms</span>
<div style="left:164px;top:572px;width:2668px;height:120px;background:#0c0c0c;"></div>
<div style="left:166px;top:574px;width:2660px;height:10.5px;background:#6b9660;"></div>
<div style="left:166px;top:592px;width:2660px;height:12px;background:#6b9660;"></div>
<div style="left:614.5px;top:612px;width:2202.5px;height:12px;background:#c19a35;"></div>
<div style="left:620.5px;top:632px;width:2193.0px;height:12px;background:#c19a35;"></div>
<div style="left:620.5px;top:652px;width:2194.5px;height:12px;background:#c19a35;"></div>
<div style="left:725.5px;top:672px;width:2077.5px;height:12px;background:#5fabb9;"></div>
<div style="left:831px;top:574px;width:2px;height:116px;background:#c8c8c8;"></div>
<div style="left:1498px;top:574px;width:2px;height:116px;background:#c8c8c8;"></div>
<div style="left:2164px;top:574px;width:2px;height:116px;background:#c8c8c8;"></div>
<div style="left:164px;top:572px;width:2668px;height:120px;border:2px solid #7f7f7f;border-top-color:#8a8a8a;"></div>
<div style="left:163.5px;top:574px;width:5.5px;height:40px;background:#555555;"></div>
<div style="left:2827.5px;top:574px;width:5.5px;height:40px;background:#555555;"></div>
<div style="left:150px;top:706px;width:2696px;height:78px;background:#202020;border-top:2px solid #3b3b3b;border-bottom:2px solid #3b3b3b;"></div>
<span id="t32" class="t" style="left:163.03px;top:727.53px;font-size:36px;line-height:36px;color:#dedede;-webkit-text-stroke:0.43px currentColor;transform:scaleX(0.9734);">Service &amp; Operation</span>
<svg style="left:580px;top:724px;" width="40" height="40" viewBox="0 0 40 40" ><g fill="none" stroke="#c3ceda" stroke-width="3.9" stroke-linecap="round" stroke-linejoin="round"><path d="M8,15.5 L16,24.3 L24,15.5"/></g></svg>
<svg style="left:632px;top:724px;" width="40" height="40" viewBox="0 0 40 40" ><g fill="none" stroke="#c3ceda" stroke-width="3.9" stroke-linecap="round" stroke-linejoin="round"><path d="M15,12.5 L25,20.5 L15,29"/></g></svg>
<svg style="left:688px;top:724px;" width="40" height="40" viewBox="0 0 40 40" ><g fill="none" stroke="#c3ceda" stroke-width="3.9" stroke-linecap="round" stroke-linejoin="round"><path d="M13.5,10.5 L20,16.5 L26.5,10.5 M13.5,22 L20,28.5 L26.5,22"/></g></svg>
<svg style="left:744px;top:724px;" width="40" height="40" viewBox="0 0 40 40" ><g fill="none" stroke="#c3ceda" stroke-width="3.9" stroke-linecap="round" stroke-linejoin="round"><path d="M11,14.5 L17.5,20.5 L11,27 M22.5,14.5 L29,20.5 L22.5,27"/></g></svg>
<div style="left:803.5px;top:758px;width:2px;height:17.5px;background:#d8d8d8;"></div>
<div style="left:811.5px;top:758px;width:2px;height:17.5px;background:#d8d8d8;"></div>
<span id="t33" class="t" style="left:831.21px;top:731.80px;font-size:28px;line-height:28px;color:#c3ccd6;-webkit-text-stroke:0.34px currentColor;transform:scaleX(1.0296);">0ms</span>
<span id="t34" class="t" style="left:1334.97px;top:731.80px;font-size:28px;line-height:28px;color:#c3ccd6;-webkit-text-stroke:0.34px currentColor;transform:scaleX(1.0265);">16.16ms</span>
<span id="t35" class="t" style="left:1841.02px;top:731.80px;font-size:28px;line-height:28px;color:#c3ccd6;-webkit-text-stroke:0.34px currentColor;transform:scaleX(1.0173);">32.31ms</span>
<span id="t36" class="t" style="left:2348.00px;top:731.80px;font-size:28px;line-height:28px;color:#c3ccd6;-webkit-text-stroke:0.34px currentColor;transform:scaleX(1.0093);">48.47ms</span>
<span id="t37" class="t" style="left:2729.49px;top:731.80px;font-size:28px;line-height:28px;color:#c3ccd6;-webkit-text-stroke:0.34px currentColor;transform:scaleX(1.0187);">64.63ms</span>
<div style="left:150px;top:784px;width:675px;height:224px;background:#131313;"></div>
<div style="left:150px;top:1008px;width:675px;height:56px;background:#1d1d1e;"></div>
<div style="left:826px;top:1006px;width:2020px;height:58px;background:#151515;border-top:2px solid #2c2c2c;"></div>
<div style="left:150px;top:1008px;width:675px;height:1px;background:#1a1a1a;"></div>
<div style="left:388px;top:1064px;width:437px;height:522px;background:#382f1b;border-top:2px solid #5a4f3b;"></div>
<div style="left:150px;top:1064px;width:238px;height:2px;background:#333333;"></div>
<div style="left:1330px;top:708px;width:2px;height:356px;background:#383838;"></div>
<div style="left:1835px;top:708px;width:2px;height:356px;background:#383838;"></div>
<div style="left:2340px;top:708px;width:2px;height:356px;background:#383838;"></div>
<div style="left:824px;top:708px;width:2px;height:878px;background:#3b3b3b;"></div>
<div style="left:156px;top:784px;width:2px;height:802px;background:#383838;"></div>
<div style="left:202px;top:840px;width:2px;height:746px;background:#383838;"></div>
<div style="left:248px;top:896px;width:2px;height:690px;background:#383838;"></div>
<div style="left:294px;top:952px;width:2px;height:634px;background:#383838;"></div>
<div style="left:340px;top:1008px;width:2px;height:578px;background:#383838;"></div>
<svg style="left:164px;top:800.5px;" width="24" height="24" viewBox="0 0 24 24" ><path transform="rotate(0 12 12)" d="M4.0,8.25 L12,15.75 L20.0,8.25" fill="none" stroke="#e6e6e6" stroke-width="1.9" stroke-linecap="round" stroke-linejoin="round"/></svg>
<div style="left:196px;top:792px;width:8px;height:40px;background:#7eb26d;"></div>
<span id="t38" class="t" style="left:216.99px;top:796.30px;font-size:28px;line-height:28px;color:#f0f0f0;-webkit-text-stroke:0.34px currentColor;transform:scaleX(1.1561);">lb</span>
<span id="t39" class="t" style="left:255.95px;top:801.04px;font-size:22.4px;line-height:22.4px;color:#8c8c8c;-webkit-text-stroke:0.27px currentColor;transform:scaleX(1.0413);">HTTP Client</span>
<svg style="left:782px;top:794px;" width="32" height="32" viewBox="0 0 24 24" ><g fill="none" stroke="#dcdcdc" stroke-width="1.9" stroke-linecap="round" stroke-linejoin="round"><path d="M13.4,3 H7.2 A2.2,2.2 0 0 0 5,5.2 V18.8 A2.2,2.2 0 0 0 7.2,21 H16.8 A2.2,2.2 0 0 0 19,18.8 V8.6 Z"/><path d="M13.4,3 V6.6 a2,2 0 0 0 2,2 H19"/><path d="M9,13.2 H15 M9,16.8 H15 M9,9.6 H10.2"/></g></svg>
<svg style="left:210px;top:856.5px;" width="24" height="24" viewBox="0 0 24 24" ><path transform="rotate(0 12 12)" d="M4.0,8.25 L12,15.75 L20.0,8.25" fill="none" stroke="#e6e6e6" stroke-width="1.9" stroke-linecap="round" stroke-linejoin="round"/></svg>
<div style="left:242px;top:848px;width:8px;height:40px;background:#7eb26d;"></div>
<svg style="left:263.75px;top:856px;" width="24" height="24" viewBox="0 0 24 24" ><circle cx="12" cy="12" r="12" fill="#de3238"/><path fill="#0d0909" d="M9.8,4.8 h4.4 l-0.7,9.6 h-3z"/><rect x="10" y="15.8" width="4" height="3.7" rx="0.5" fill="#0d0909"/></svg>
<span id="t40" class="t" style="left:295.04px;top:852.30px;font-size:28px;line-height:28px;color:#f0f0f0;-webkit-text-stroke:0.34px currentColor;transform:scaleX(1.1524);">lb</span>
<span id="t41" class="t" style="left:334.00px;top:857.04px;font-size:22.4px;line-height:22.4px;color:#8c8c8c;-webkit-text-stroke:0.27px currentColor;transform:scaleX(1.0003);">HTTP GET</span>
<svg style="left:782px;top:850px;" width="32" height="32" viewBox="0 0 24 24" ><g fill="none" stroke="#dcdcdc" stroke-width="1.9" stroke-linecap="round" stroke-linejoin="round"><path d="M13.4,3 H7.2 A2.2,2.2 0 0 0 5,5.2 V18.8 A2.2,2.2 0 0 0 7.2,21 H16.8 A2.2,2.2 0 0 0 19,18.8 V8.6 Z"/><path d="M13.4,3 V6.6 a2,2 0 0 0 2,2 H19"/><path d="M9,13.2 H15 M9,16.8 H15 M9,9.6 H10.2"/></g></svg>
<svg style="left:256px;top:912.5px;" width="24" height="24" viewBox="0 0 24 24" ><path transform="rotate(0 12 12)" d="M4.0,8.25 L12,15.75 L20.0,8.25" fill="none" stroke="#e6e6e6" stroke-width="1.9" stroke-linecap="round" stroke-linejoin="round"/></svg>
<div style="left:288px;top:904px;width:8px;height:40px;background:#eab839;"></div>
<svg style="left:309.75px;top:912px;" width="24" height="24" viewBox="0 0 24 24" ><circle cx="12" cy="12" r="12" fill="#de3238"/><path fill="#0d0909" d="M9.8,4.8 h4.4 l-0.7,9.6 h-3z"/><rect x="10" y="15.8" width="4" height="3.7" rx="0.5" fill="#0d0909"/></svg>
<span id="t42" class="t" style="left:341.98px;top:908.30px;font-size:28px;line-height:28px;color:#f0f0f0;-webkit-text-stroke:0.34px currentColor;transform:scaleX(1.0439);">app</span>
<span id="t43" class="t" style="left:404.98px;top:913.04px;font-size:22.4px;line-height:22.4px;color:#8c8c8c;-webkit-text-stroke:0.27px currentColor;transform:scaleX(1.0179);">HTTP GET - root</span>
<svg style="left:782px;top:906px;" width="32" height="32" viewBox="0 0 24 24" ><g fill="none" stroke="#dcdcdc" stroke-width="1.9" stroke-linecap="round" stroke-linejoin="round"><path d="M13.4,3 H7.2 A2.2,2.2 0 0 0 5,5.2 V18.8 A2.2,2.2 0 0 0 7.2,21 H16.8 A2.2,2.2 0 0 0 19,18.8 V8.6 Z"/><path d="M13.4,3 V6.6 a2,2 0 0 0 2,2 H19"/><path d="M9,13.2 H15 M9,16.8 H15 M9,9.6 H10.2"/></g></svg>
<svg style="left:302px;top:968.5px;" width="24" height="24" viewBox="0 0 24 24" ><path transform="rotate(0 12 12)" d="M4.0,8.25 L12,15.75 L20.0,8.25" fill="none" stroke="#e6e6e6" stroke-width="1.9" stroke-linecap="round" stroke-linejoin="round"/></svg>
<div style="left:334px;top:960px;width:8px;height:40px;background:#eab839;"></div>
<span id="t44" class="t" style="left:355.98px;top:964.30px;font-size:28px;line-height:28px;color:#f0f0f0;-webkit-text-stroke:0.34px currentColor;transform:scaleX(1.0439);">app</span>
<span id="t45" class="t" style="left:418.91px;top:969.04px;font-size:22.4px;line-height:22.4px;color:#8c8c8c;-webkit-text-stroke:0.27px currentColor;transform:scaleX(1.0454);">HTTP Client</span>
<svg style="left:782px;top:962px;" width="32" height="32" viewBox="0 0 24 24" ><g fill="none" stroke="#dcdcdc" stroke-width="1.9" stroke-linecap="round" stroke-linejoin="round"><path d="M13.4,3 H7.2 A2.2,2.2 0 0 0 5,5.2 V18.8 A2.2,2.2 0 0 0 7.2,21 H16.8 A2.2,2.2 0 0 0 19,18.8 V8.6 Z"/><path d="M13.4,3 V6.6 a2,2 0 0 0 2,2 H19"/><path d="M9,13.2 H15 M9,16.8 H15 M9,9.6 H10.2"/></g></svg>
<svg style="left:348px;top:1024.5px;" width="24" height="24" viewBox="0 0 24 24" ><path transform="rotate(0 12 12)" d="M4.0,8.25 L12,15.75 L20.0,8.25" fill="none" stroke="#e6e6e6" stroke-width="1.9" stroke-linecap="round" stroke-linejoin="round"/></svg>
<div style="left:380px;top:1016px;width:8px;height:578px;background:#eab839;"></div>
<svg style="left:401.75px;top:1024px;" width="24" height="24" viewBox="0 0 24 24" ><circle cx="12" cy="12" r="12" fill="#de3238"/><path fill="#0d0909" d="M9.8,4.8 h4.4 l-0.7,9.6 h-3z"/><rect x="10" y="15.8" width="4" height="3.7" rx="0.5" fill="#0d0909"/></svg>
<span id="t46" class="t" style="left:433.98px;top:1020.30px;font-size:28px;line-height:28px;color:#f0f0f0;-webkit-text-stroke:0.34px currentColor;transform:scaleX(1.0439);">app</span>
<span id="t47" class="t" style="left:497.00px;top:1025.04px;font-size:22.4px;line-height:22.4px;color:#8c8c8c;-webkit-text-stroke:0.27px currentColor;transform:scaleX(1.0003);">HTTP GET</span>
<svg style="left:782px;top:1018px;" width="32" height="32" viewBox="0 0 24 24" ><g fill="none" stroke="#dcdcdc" stroke-width="1.9" stroke-linecap="round" stroke-linejoin="round"><path d="M13.4,3 H7.2 A2.2,2.2 0 0 0 5,5.2 V18.8 A2.2,2.2 0 0 0 7.2,21 H16.8 A2.2,2.2 0 0 0 19,18.8 V8.6 Z"/><path d="M13.4,3 V6.6 a2,2 0 0 0 2,2 H19"/><path d="M9,13.2 H15 M9,16.8 H15 M9,9.6 H10.2"/></g></svg>
<div style="left:824.5px;top:802px;width:2019.5px;height:20px;background:#7eb26d;border-radius:6px;"></div>
<div style="left:824.5px;top:858px;width:2021.5px;height:20px;background:#7eb26d;border-radius:6px;"></div>
<div style="left:1165.75px;top:914px;width:1670.25px;height:20px;background:#eab839;border-radius:6px;"></div>
<div style="left:1170px;top:970px;width:1662px;height:20px;background:#eab839;border-radius:6px;"></div>
<div style="left:1170px;top:1026px;width:1664px;height:20px;background:#eab839;border-radius:6px;"></div>
<span id="t48" class="t" style="left:1060.26px;top:913.43px;font-size:24px;line-height:24px;color:#a9a9a9;-webkit-text-stroke:0.29px currentColor;transform:scaleX(1.0059);">53.36ms</span>
<span id="t49" class="t" style="left:1064.45px;top:969.43px;font-size:24px;line-height:24px;color:#a9a9a9;-webkit-text-stroke:0.29px currentColor;transform:scaleX(1.0112);">53.13ms</span>
<span id="t50" class="t" style="left:1064.43px;top:1025.43px;font-size:24px;line-height:24px;color:#ffffff;-webkit-text-stroke:0.29px currentColor;transform:scaleX(1.0113);">53.17ms</span>
<div style="left:824px;top:1064px;width:2022px;height:522px;background:#161616;border-top:6px solid #eab839;border-right:2px solid #3a3a3a;border-left:2px solid #3d3d3d;"></div>
<h2 id="t51" class="t" style="left:845.43px;top:1092.07px;font-size:48px;line-height:48px;color:#d9dbdd;-webkit-text-stroke:0.58px currentColor;transform:scaleX(0.9442);">HTTP GET</h2>
<span id="t52" class="t" style="left:2119.51px;top:1102.55px;font-size:28px;line-height:28px;color:#6f6f6f;-webkit-text-stroke:0.34px currentColor;transform:scaleX(0.9898);">Service:</span>
<span id="t53" class="t" style="left:2225.05px;top:1102.55px;font-size:28px;line-height:28px;color:#c7d0d9;font-weight:700;transform:scaleX(0.9267);">app</span>
<div style="left:2288px;top:1106px;width:2px;height:24px;background:#343434;"></div>
<span id="t54" class="t" style="left:2304.96px;top:1102.55px;font-size:28px;line-height:28px;color:#6f6f6f;-webkit-text-stroke:0.34px currentColor;transform:scaleX(1.0046);">Duration:</span>
<span id="t55" class="t" style="left:2424.99px;top:1102.55px;font-size:28px;line-height:28px;color:#c7d0d9;font-weight:700;transform:scaleX(0.9910);">53.17ms</span>
<div style="left:2552px;top:1106px;width:2px;height:24px;background:#343434;"></div>
<span id="t56" class="t" style="left:2568.98px;top:1102.55px;font-size:28px;line-height:28px;color:#6f6f6f;-webkit-text-stroke:0.34px currentColor;transform:scaleX(1.0152);">Start Time:</span>
<span id="t57" class="t" style="left:2713.00px;top:1102.55px;font-size:28px;line-height:28px;color:#c7d0d9;font-weight:700;transform:scaleX(1.0093);">11.06ms</span>
<div style="left:848px;top:1188px;width:1976px;height:2px;background:#303030;"></div>
<svg style="left:852.5px;top:1256px;" width="24" height="24" viewBox="0 0 24 24" ><path transform="rotate(-90 12 12)" d="M4.0,8.25 L12,15.75 L20.0,8.25" fill="none" stroke="#d0d0d0" stroke-width="2" stroke-linecap="round" stroke-linejoin="round"/></svg>
<span id="t58" class="t" style="left:885.00px;top:1253.80px;font-size:28px;line-height:28px;color:#c7d0d9;font-weight:700;transform:scaleX(0.9368);">Tags:</span>
<span id="t59" class="t" style="left:971.49px;top:1253.80px;font-size:28px;line-height:28px;color:#7c7c7c;-webkit-text-stroke:0.34px currentColor;transform:scaleX(1.0145);">component</span>
<span id="t60" class="t" style="left:1120.14px;top:1253.80px;font-size:28px;line-height:28px;color:#6a6a6a;-webkit-text-stroke:0.34px currentColor;transform:scaleX(0.8571);">=</span>
<span id="t61" class="t" style="left:1139.91px;top:1253.80px;font-size:28px;line-height:28px;color:#c7d0d9;-webkit-text-stroke:0.34px currentColor;transform:scaleX(1.0762);">net/http</span>
<div style="left:1254px;top:1252.5px;width:2px;height:31px;background:#383838;"></div>
<span id="t62" class="t" style="left:1276.18px;top:1253.80px;font-size:28px;line-height:28px;color:#7c7c7c;-webkit-text-stroke:0.34px currentColor;transform:scaleX(0.9917);">error</span>
<span id="t63" class="t" style="left:1342.39px;top:1253.80px;font-size:28px;line-height:28px;color:#6a6a6a;-webkit-text-stroke:0.34px currentColor;transform:scaleX(0.8268);">=</span>
<span id="t64" class="t" style="left:1362.52px;top:1253.80px;font-size:28px;line-height:28px;color:#c7d0d9;-webkit-text-stroke:0.34px currentColor;transform:scaleX(0.9799);">true</span>
<div style="left:1424px;top:1252.5px;width:2px;height:31px;background:#383838;"></div>
<span id="t65" class="t" style="left:1445.96px;top:1253.80px;font-size:28px;line-height:28px;color:#7c7c7c;-webkit-text-stroke:0.34px currentColor;transform:scaleX(1.0343);">http.method</span>
<span id="t66" class="t" style="left:1605.14px;top:1253.80px;font-size:28px;line-height:28px;color:#6a6a6a;-webkit-text-stroke:0.34px currentColor;transform:scaleX(0.8571);">=</span>
<span id="t67" class="t" style="left:1625.10px;top:1253.80px;font-size:28px;line-height:28px;color:#c7d0d9;-webkit-text-stroke:0.34px currentColor;transform:scaleX(0.8782);">GET</span>
<div style="left:1692px;top:1252.5px;width:2px;height:31px;background:#383838;"></div>
<span id="t68" class="t" style="left:1713.21px;top:1253.80px;font-size:28px;line-height:28px;color:#7c7c7c;-webkit-text-stroke:0.34px currentColor;transform:scaleX(1.0167);">http.status_code</span>
<span id="t69" class="t" style="left:1927.78px;top:1253.80px;font-size:28px;line-height:28px;color:#6a6a6a;-webkit-text-stroke:0.34px currentColor;transform:scaleX(0.8796);">=</span>
<span id="t70" class="t" style="left:1948.00px;top:1253.80px;font-size:28px;line-height:28px;color:#c7d0d9;-webkit-text-stroke:0.34px currentColor;">500</span>
<div style="left:2010px;top:1252.5px;width:2px;height:31px;background:#383838;"></div>
<span id="t71" class="t" style="left:2029.92px;top:1253.80px;font-size:28px;line-height:28px;color:#7c7c7c;-webkit-text-stroke:0.34px currentColor;transform:scaleX(1.0389);">http.url</span>
<span id="t72" class="t" style="left:2125.26px;top:1253.80px;font-size:28px;line-height:28px;color:#6a6a6a;-webkit-text-stroke:0.34px currentColor;transform:scaleX(0.8497);">=</span>
<span id="t73" class="t" style="left:2144.97px;top:1253.80px;font-size:28px;line-height:28px;color:#c7d0d9;-webkit-text-stroke:0.34px currentColor;transform:scaleX(0.9975);">db:80</span>
<div style="left:2230px;top:1252.5px;width:2px;height:31px;background:#383838;"></div>
<span id="t74" class="t" style="left:2250.96px;top:1253.80px;font-size:28px;line-height:28px;color:#7c7c7c;-webkit-text-stroke:0.34px currentColor;transform:scaleX(1.0325);">net/http.reused</span>
<span id="t75" class="t" style="left:2450.14px;top:1253.80px;font-size:28px;line-height:28px;color:#6a6a6a;-webkit-text-stroke:0.34px currentColor;transform:scaleX(0.8571);">=</span>
<span id="t76" class="t" style="left:2471.00px;top:1253.80px;font-size:28px;line-height:28px;color:#c7d0d9;-webkit-text-stroke:0.34px currentColor;transform:scaleX(1.0174);">false</span>
<div style="left:2545.75px;top:1252.5px;width:2px;height:31px;background:#383838;"></div>
<span id="t77" class="t" style="left:2565.99px;top:1253.80px;font-size:28px;line-height:28px;color:#7c7c7c;-webkit-text-stroke:0.34px currentColor;transform:scaleX(1.0043);">net/http.was_idle...</span>
<svg style="left:852.5px;top:1312px;" width="24" height="24" viewBox="0 0 24 24" ><path transform="rotate(-90 12 12)" d="M4.0,8.25 L12,15.75 L20.0,8.25" fill="none" stroke="#d0d0d0" stroke-width="2" stroke-linecap="round" stroke-linejoin="round"/></svg>
<span id="t78" class="t" style="left:884.07px;top:1310.05px;font-size:28px;line-height:28px;color:#c7d0d9;font-weight:700;transform:scaleX(0.9305);">Process:</span>
<span id="t79" class="t" style="left:1012.27px;top:1310.05px;font-size:28px;line-height:28px;color:#7c7c7c;-webkit-text-stroke:0.34px currentColor;transform:scaleX(1.0119);">client-uuid</span>
<span id="t80" class="t" style="left:1149.39px;top:1310.05px;font-size:28px;line-height:28px;color:#6a6a6a;-webkit-text-stroke:0.34px currentColor;transform:scaleX(0.8268);">=</span>
<span id="t81" class="t" style="left:1169.50px;top:1310.05px;font-size:28px;line-height:28px;color:#c7d0d9;-webkit-text-stroke:0.34px currentColor;transform:scaleX(0.9920);">4e24666612b52dea</span>
<div style="left:1432px;top:1308.75px;width:2px;height:31px;background:#383838;"></div>
<span id="t82" class="t" style="left:1453.98px;top:1310.05px;font-size:28px;line-height:28px;color:#7c7c7c;-webkit-text-stroke:0.34px currentColor;transform:scaleX(1.0126);">cluster</span>
<span id="t83" class="t" style="left:1545.39px;top:1310.05px;font-size:28px;line-height:28px;color:#6a6a6a;-webkit-text-stroke:0.34px currentColor;transform:scaleX(0.8268);">=</span>
<span id="t84" class="t" style="left:1566.24px;top:1310.05px;font-size:28px;line-height:28px;color:#c7d0d9;-webkit-text-stroke:0.34px currentColor;transform:scaleX(0.9962);">tns-demo</span>
<div style="left:1697.75px;top:1308.75px;width:2px;height:31px;background:#383838;"></div>
<span id="t85" class="t" style="left:1717.46px;top:1310.05px;font-size:28px;line-height:28px;color:#7c7c7c;-webkit-text-stroke:0.34px currentColor;transform:scaleX(1.0125);">container</span>
<span id="t86" class="t" style="left:1841.50px;top:1310.05px;font-size:28px;line-height:28px;color:#6a6a6a;-webkit-text-stroke:0.34px currentColor;transform:scaleX(0.8764);">=</span>
<span id="t87" class="t" style="left:1861.46px;top:1310.05px;font-size:28px;line-height:28px;color:#c7d0d9;-webkit-text-stroke:0.34px currentColor;transform:scaleX(1.0056);">app</span>
<div style="left:1924px;top:1308.75px;width:2px;height:31px;background:#383838;"></div>
<span id="t88" class="t" style="left:1943.49px;top:1310.05px;font-size:28px;line-height:28px;color:#7c7c7c;-webkit-text-stroke:0.34px currentColor;transform:scaleX(1.0236);">host.hostname</span>
<span id="t89" class="t" style="left:2138.14px;top:1310.05px;font-size:28px;line-height:28px;color:#6a6a6a;-webkit-text-stroke:0.34px currentColor;transform:scaleX(0.8393);">=</span>
<span id="t90" class="t" style="left:2158.00px;top:1310.05px;font-size:28px;line-height:28px;color:#c7d0d9;-webkit-text-stroke:0.34px currentColor;transform:scaleX(0.9986);">app-8498cb7b9d-l7h4z</span>
<div style="left:2457.75px;top:1308.75px;width:2px;height:31px;background:#383838;"></div>
<span id="t91" class="t" style="left:2479.94px;top:1310.05px;font-size:28px;line-height:28px;color:#7c7c7c;-webkit-text-stroke:0.34px currentColor;transform:scaleX(1.0025);">ip</span>
<span id="t92" class="t" style="left:2509.14px;top:1310.05px;font-size:28px;line-height:28px;color:#6a6a6a;-webkit-text-stroke:0.34px currentColor;transform:scaleX(0.8571);">=</span>
<span id="t93" class="t" style="left:2528.47px;top:1310.05px;font-size:28px;line-height:28px;color:#c7d0d9;-webkit-text-stroke:0.34px currentColor;transform:scaleX(1.0288);">10.56.111.17</span>
<div style="left:2705.75px;top:1308.75px;width:2px;height:31px;background:#383838;"></div>
<span id="t94" class="t" style="left:2728.04px;top:1310.05px;font-size:28px;line-height:28px;color:#7c7c7c;-webkit-text-stroke:0.34px currentColor;transform:scaleX(0.9560);">name...</span>
<div style="left:848px;top:1360px;width:1976px;height:240px;background:#1b1b1b;border:2px solid #333333;"></div>
<div style="left:850px;top:1362px;width:1972px;height:58px;background:#282828;border-bottom:2px solid #353535;"></div>
<svg style="left:866px;top:1376.5px;" width="24" height="24" viewBox="0 0 24 24" ><path transform="rotate(0 12 12)" d="M3.5,8.0 L12,16.0 L20.5,8.0" fill="none" stroke="#d0d0d0" stroke-width="2" stroke-linecap="round" stroke-linejoin="round"/></svg>
<span id="t95" class="t" style="left:904.34px;top:1373.80px;font-size:28px;line-height:28px;color:#c7d0d9;-webkit-text-stroke:0.34px currentColor;transform:scaleX(0.9547);"><b>Logs</b> (10)</span>
<svg style="left:868px;top:1448.5px;" width="24" height="24" viewBox="0 0 24 24" ><path transform="rotate(-90 12 12)" d="M4.75,8.25 L12,15.75 L19.25,8.25" fill="none" stroke="#d0d0d0" stroke-width="2" stroke-linecap="round" stroke-linejoin="round"/></svg>
<span id="t96" class="t" style="left:901.50px;top:1445.80px;font-size:28px;line-height:28px;color:#c7d0d9;font-weight:700;">11.08ms:</span>
<span id="t97" class="t" style="left:1037.24px;top:1445.80px;font-size:28px;line-height:28px;color:#7c7c7c;-webkit-text-stroke:0.34px currentColor;transform:scaleX(0.9789);">event</span>
<span id="t98" class="t" style="left:1112.14px;top:1445.80px;font-size:28px;line-height:28px;color:#6a6a6a;-webkit-text-stroke:0.34px currentColor;transform:scaleX(0.8571);">=</span>
<span id="t99" class="t" style="left:1132.03px;top:1445.80px;font-size:28px;line-height:28px;color:#c7d0d9;-webkit-text-stroke:0.34px currentColor;transform:scaleX(0.9727);">GetConn</span>
<svg style="left:868px;top:1512.6px;" width="24" height="24" viewBox="0 0 24 24" ><path transform="rotate(-90 12 12)" d="M4.75,8.25 L12,15.75 L19.25,8.25" fill="none" stroke="#d0d0d0" stroke-width="2" stroke-linecap="round" stroke-linejoin="round"/></svg>
<span id="t100" class="t" style="left:901.50px;top:1509.90px;font-size:28px;line-height:28px;color:#c7d0d9;font-weight:700;">11.47ms:</span>
<span id="t101" class="t" style="left:1037.24px;top:1509.90px;font-size:28px;line-height:28px;color:#7c7c7c;-webkit-text-stroke:0.34px currentColor;transform:scaleX(0.9789);">event</span>
<span id="t102" class="t" style="left:1112.14px;top:1509.90px;font-size:28px;line-height:28px;color:#6a6a6a;-webkit-text-stroke:0.34px currentColor;transform:scaleX(0.8571);">=</span>
<span id="t103" class="t" style="left:1131.05px;top:1509.90px;font-size:28px;line-height:28px;color:#c7d0d9;-webkit-text-stroke:0.34px currentColor;transform:scaleX(0.9744);">DNSStart</span>
<div style="left:1262px;top:1508.6px;width:2px;height:31px;background:#383838;"></div>
<span id="t104" class="t" style="left:1283.21px;top:1509.90px;font-size:28px;line-height:28px;color:#7c7c7c;-webkit-text-stroke:0.34px currentColor;transform:scaleX(1.0196);">host</span>
<span id="t105" class="t" style="left:1344.12px;top:1509.90px;font-size:28px;line-height:28px;color:#6a6a6a;-webkit-text-stroke:0.34px currentColor;transform:scaleX(0.8668);">=</span>
<span id="t106" class="t" style="left:1363.96px;top:1509.90px;font-size:28px;line-height:28px;color:#c7d0d9;-webkit-text-stroke:0.34px currentColor;transform:scaleX(1.0034);">db</span>
<svg style="left:868px;top:1576.7px;" width="24" height="24" viewBox="0 0 24 24" ><path transform="rotate(-90 12 12)" d="M4.75,8.25 L12,15.75 L19.25,8.25" fill="none" stroke="#d0d0d0" stroke-width="2" stroke-linecap="round" stroke-linejoin="round"/></svg>
<span id="t107" class="t" style="left:901.52px;top:1574.00px;font-size:28px;line-height:28px;color:#c7d0d9;font-weight:700;transform:scaleX(0.9829);">12.46ms:</span>
<span id="t108" class="t" style="left:1038.23px;top:1574.00px;font-size:28px;line-height:28px;color:#7c7c7c;-webkit-text-stroke:0.34px currentColor;transform:scaleX(0.9786);">event</span>
<span id="t109" class="t" style="left:1112.14px;top:1574.00px;font-size:28px;line-height:28px;color:#6a6a6a;-webkit-text-stroke:0.34px currentColor;transform:scaleX(0.8571);">=</span>
<span id="t110" class="t" style="left:1131.10px;top:1574.00px;font-size:28px;line-height:28px;color:#c7d0d9;-webkit-text-stroke:0.34px currentColor;transform:scaleX(0.9633);">DNSDone</span>
<div style="left:1266px;top:1572.7px;width:2px;height:31px;background:#383838;"></div>
<span id="t111" class="t" style="left:1288.22px;top:1574.00px;font-size:28px;line-height:28px;color:#7c7c7c;-webkit-text-stroke:0.34px currentColor;transform:scaleX(0.9913);">addr</span>
<span id="t112" class="t" style="left:1350.14px;top:1574.00px;font-size:28px;line-height:28px;color:#6a6a6a;-webkit-text-stroke:0.34px currentColor;transform:scaleX(0.8571);">=</span>
<span id="t113" class="t" style="left:1369.74px;top:1574.00px;font-size:28px;line-height:28px;color:#c7d0d9;-webkit-text-stroke:0.34px currentColor;transform:scaleX(1.0078);">10.59.253.182</span>
</section>
</div>
</body></html>
